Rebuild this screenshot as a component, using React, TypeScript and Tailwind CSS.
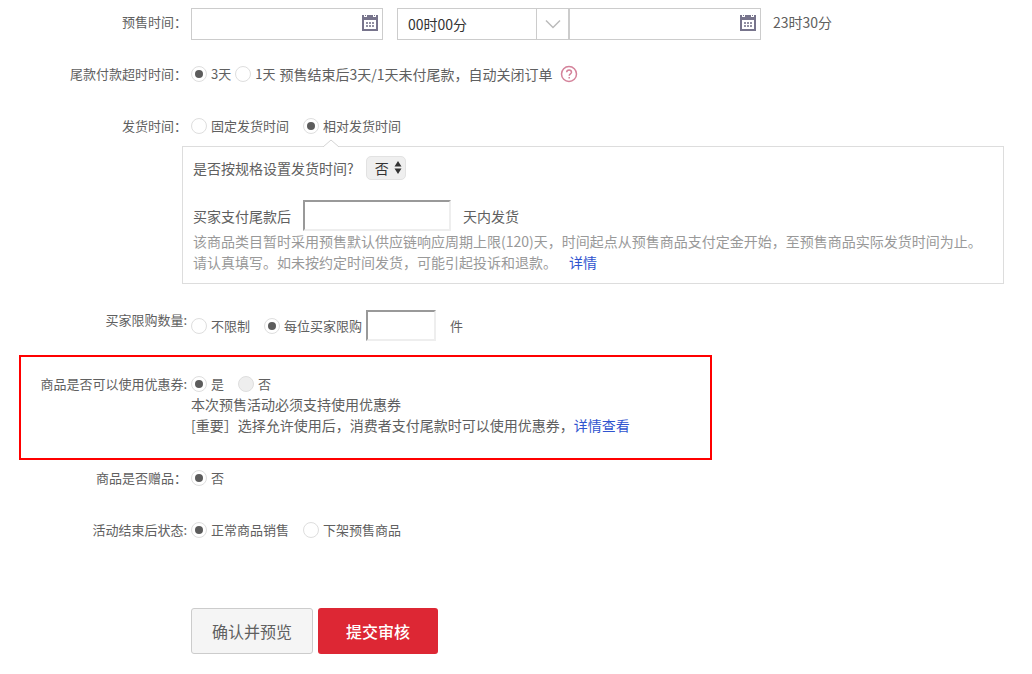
import type { ReactNode } from "react";

type RadioProps = {
  name: string;
  label: string;
  checked?: boolean;
  disabled?: boolean;
};

const Radio = ({ name, label, checked, disabled }: RadioProps) => {
  return (
    <label className="flex items-center gap-1 text-[13px] leading-5">
      <input
        type="radio"
        name={name}
        defaultChecked={checked}
        disabled={disabled}
        className="grid size-4 shrink-0 appearance-none place-content-center rounded-full border border-[#dedede] bg-white before:size-2 before:rounded-full checked:before:bg-[#5c5c5c] disabled:bg-[#eeeeee]"
      />
      {label}
    </label>
  );
};

type RowProps = {
  label: string;
  className?: string;
  labelClassName?: string;
  children: ReactNode;
};

const Row = ({
  label,
  className = "",
  labelClassName = "",
  children,
}: RowProps) => {
  return (
    <div
      role="group"
      aria-label={label}
      className={`flex gap-1 ${className}`}
    >
      <div
        className={`w-[187px] shrink-0 text-right text-[13px] leading-5 ${labelClassName}`}
      >
        {label}
      </div>
      <div className="min-w-0 flex-1">{children}</div>
    </div>
  );
};

const CalendarIcon = () => {
  return (
    <svg
      className="absolute top-1.5 right-1 size-[18px]"
      viewBox="0 0 18 18"
      fill="#77748c"
      aria-hidden="true"
    >
      <path
        fillRule="evenodd"
        d="M1 1h2v2h3V1h6v2h3V1h2v16H1zM3 6v9h12V6z"
      />
      <path d="M4 1h1v1H4zM13 1h1v1h-1z" />
      <path
        d="M5 8h2v2H5zM8 8h2v2H8zM11 8h2v2h-2zM5 11h2v2H5zM8 11h2v2H8zM11 11h2v2h-2z"
        opacity="0.8"
      />
    </svg>
  );
};

const DateField = ({ label }: { label: string }) => {
  return (
    <div className="relative">
      <input
        type="text"
        aria-label={label}
        className="block h-8 w-48 border border-[#cccccc] pr-7 pl-2"
      />
      <CalendarIcon />
    </div>
  );
};

const insetField =
  "h-[31px] border-2 border-t-[#999999] border-l-[#999999] border-r-[#eeeeee] border-b-[#eeeeee] px-1";

const App = () => {
  return (
    <form className="pt-2 pb-4 font-['Noto_Sans_CJK_SC',sans-serif] text-sm text-[#606060]">
      <Row label="预售时间：" labelClassName="pt-1">
        <div className="flex items-start">
          <DateField label="开始日期" />
          <div className="relative ml-3.5">
            <select
              aria-label="开始时间"
              className="block h-8 w-[172px] appearance-none border border-[#cccccc] pl-2.5 text-[#333333]"
            >
              <option>00时00分</option>
            </select>
            <div className="pointer-events-none absolute inset-y-0 right-0 flex w-[33px] items-center justify-center border-l border-[#cccccc]">
              <svg width="16" height="10" viewBox="0 0 16 10" fill="none">
                <path d="M1 1.500l7 7 7-7" stroke="#bbbbbb" strokeWidth="1.500" />
              </svg>
            </div>
          </div>
          <DateField label="结束日期" />
          <span className="ml-3 pt-1 leading-5">23时30分</span>
        </div>
      </Row>

      <Row label="尾款付款超时时间：" className="mt-6">
        <div className="flex items-center gap-1">
          <Radio name="timeout" label="3天" checked />
          <Radio name="timeout" label="1天" />
          <span className="leading-5">
            预售结束后3天/1天未付尾款，自动关闭订单
          </span>
          <svg
            className="ml-1 size-[18px]"
            viewBox="0 0 18 18"
            fill="none"
            stroke="#d4829a"
            strokeWidth="1.500"
            role="img"
            aria-label="帮助"
          >
            <circle cx="9" cy="9" r="7.500" />
            <path d="M6.700 7.200c0-3 4.800-3 4.800 0 0 1.600-2.300 1.700-2.300 3.600M9.200 12v1.500" />
          </svg>
        </div>
      </Row>

      <Row label="发货时间：" className="mt-8">
        <div className="flex items-center gap-3.5">
          <Radio name="delivery" label="固定发货时间" />
          <Radio name="delivery" label="相对发货时间" checked />
        </div>
      </Row>

      <section className="relative mt-2.5 mr-7 ml-[182px] border border-[#dddddd] px-2.5 pt-[9px] pb-2.5">
        <svg
          className="absolute -top-2 left-[140px]"
          width="16"
          height="8"
          viewBox="0 0 16 8"
          aria-hidden="true"
        >
          <path d="M0 8l8-7 8 7" fill="#ffffff" stroke="#d4d4d4" />
        </svg>
        <div className="flex items-center gap-3">
          <label htmlFor="by-spec" className="leading-5">
            是否按规格设置发货时间?
          </label>
          <div className="relative">
            <select
              id="by-spec"
              className="block h-6 w-10 appearance-none rounded-[5px] border border-[#e2e2e2] bg-[#efefef] pl-2 text-[#333333]"
            >
              <option>否</option>
              <option>是</option>
            </select>
            <svg
              className="pointer-events-none absolute top-[5px] right-1"
              width="8"
              height="14"
              viewBox="0 0 8 14"
              fill="#333333"
              aria-hidden="true"
            >
              <path d="M4 0l3.500 5.500h-7zM4 13l3.500-5.500h-7z" />
            </svg>
          </div>
        </div>
        <div className="mt-5 flex items-center gap-3">
          <label htmlFor="days" className="leading-5">
            买家支付尾款后
          </label>
          <input id="days" type="text" className={`w-37 ${insetField}`} />
          <span className="leading-5">天内发货</span>
        </div>
        <p className="leading-[21px] text-[#999999]">
          该商品类目暂时采用预售默认供应链响应周期上限(120)天，时间起点从预售商品支付定金开始，至预售商品实际发货时间为止。
          <br />
          请认真填写。如未按约定时间发货，可能引起投诉和退款。
          <a href="#detail" className="ml-3 text-[#2f54cf]">
            详情
          </a>
        </p>
      </section>

      <Row label="买家限购数量:" className="mt-[26px]">
        <div className="flex items-center gap-3.5">
          <Radio name="limit" label="不限制" />
          <div className="flex items-center gap-1">
            <Radio name="limit" label="每位买家限购" checked />
            <input
              type="text"
              aria-label="限购件数"
              className={`w-[70px] ${insetField}`}
            />
          </div>
          <span className="text-[13px] leading-5">件</span>
        </div>
      </Row>

      <section className="mt-3.5 ml-[19px] max-w-[693px] border-2 border-[#ff0000] pt-[17px] pb-[22px]">
        <div
          role="group"
          aria-label="商品是否可以使用优惠券"
          className="flex gap-1"
        >
          <div className="w-[166px] shrink-0 text-right text-[13px] leading-5">
            商品是否可以使用优惠券:
          </div>
          <div>
            <div className="flex items-center gap-3.5">
              <Radio name="coupon" label="是" checked />
              <Radio name="coupon" label="否" disabled />
            </div>
            <p className="leading-[21px]">
              本次预售活动必须支持使用优惠券
              <br />
              [重要］选择允许使用后，消费者支付尾款时可以使用优惠券，
              <a href="#coupon" className="text-[#2f54cf]">
                详情查看
              </a>
            </p>
          </div>
        </div>
      </section>

      <Row label="商品是否赠品：" className="mt-2">
        <Radio name="gift" label="否" checked />
      </Row>

      <Row label="活动结束后状态:" className="mt-8">
        <div className="flex items-center gap-3.5">
          <Radio name="status" label="正常商品销售" checked />
          <Radio name="status" label="下架预售商品" />
        </div>
      </Row>

      <div className="mt-[68px] ml-[191px] flex gap-[5px] text-base">
        <button
          type="button"
          className="h-[46px] rounded-[3px] border border-[#cccccc] bg-[#f5f5f5] px-5"
        >
          确认并预览
        </button>
        <button
          type="submit"
          className="h-[46px] rounded-[3px] bg-[#dd2734] px-7 font-medium text-white"
        >
          提交审核
        </button>
      </div>
    </form>
  );
};

export default App;
